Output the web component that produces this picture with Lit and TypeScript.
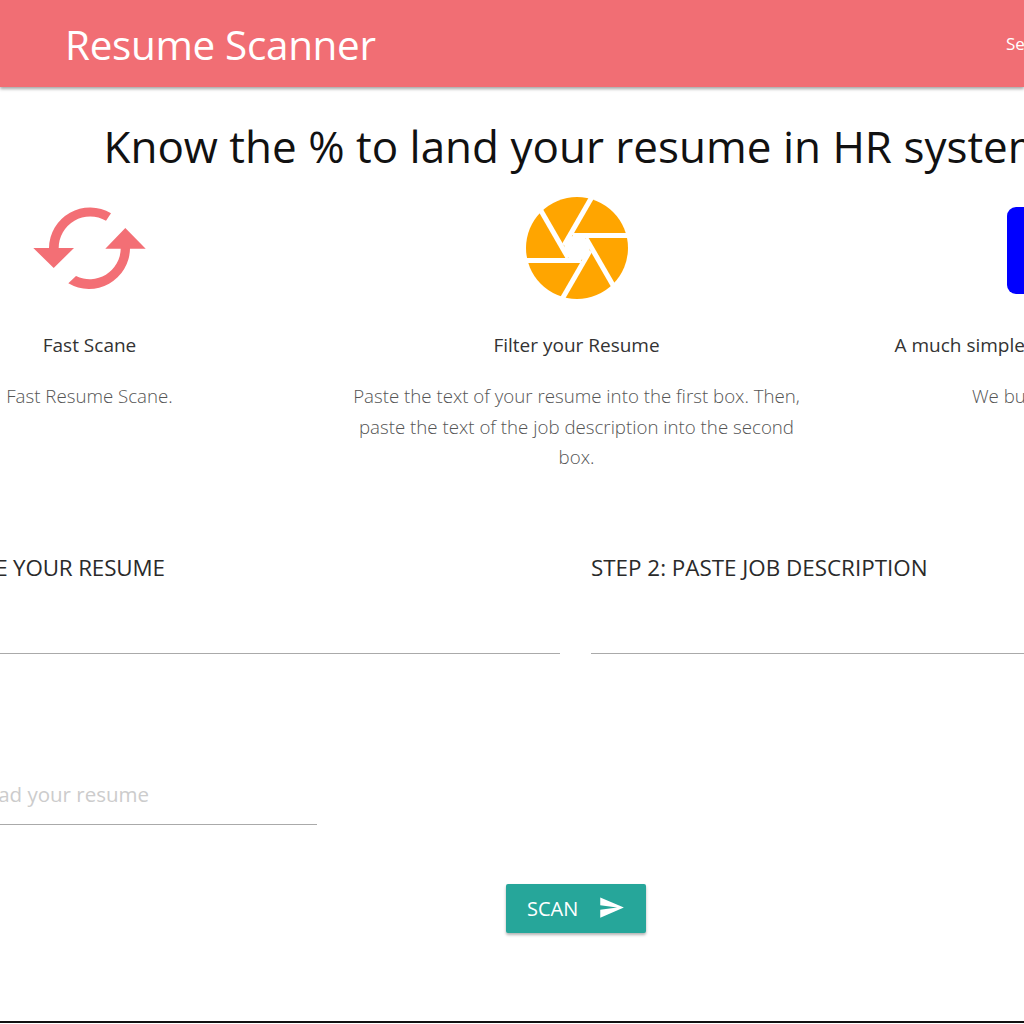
import { css, html, LitElement, svg } from "lit";
import { customElement } from "lit/decorators.js";

const features = [
	{ title: "Fast Scane", text: "Fast Resume Scane.", icon: "refresh" },
	{
		title: "Filter your Resume",
		text: "Paste the text of your resume into the first box. Then, paste the text of the job description into the second box.",
		icon: "shutter",
	},
	{
		title: "A much simpler way to check resumes",
		text: "We built this for hires.",
		icon: "block",
	},
];

const refreshIcon = html`<svg class="refresh" viewBox="33 206 114 84">
	<path fill="#f36f75" d="M33.3 248H49A41 41 0 0 1 111 213.3L106 220.7A31.5 31.5 0 0 0 58.7 248H74L53.7 268Z"/>
	<path fill="#f36f75" d="M125.3 228L145.7 248.7H130A41 41 0 0 1 68.3 283.3L76 276A31 31 0 0 0 120.7 248.7H105.3Z"/>
</svg>`;

const shutterIcon = html`<svg class="shutter" viewBox="-52 -52 104 104">
	<circle r="51" fill="#ffa500"/>
	<polygon fill="#fff" points="0,-14.6 12.6,-7.3 12.6,7.3 0,14.6 -12.6,7.3 -12.6,-7.3"/>
	${[0, 60, 120, 180, 240, 300].map(
		(deg) => svg`<line x1="-4" y1="-12.6" x2="60" y2="-12.6" stroke="#fff" stroke-width="5" transform="rotate(${deg})"/>`,
	)}
</svg>`;

@customElement("app-root")
export class AppRoot extends LitElement {
	static styles = css`
    :host {
      display: block;
      width: 1024px;
      height: 1024px;
      overflow: hidden;
      position: relative;
      background: #fff;
      color: #111;
      font-family: "Open Sans", "Noto Sans", sans-serif;
    }
    header {
      height: 87px;
      background: #f16e74;
      box-shadow: 0 2px 3px rgba(0,0,0,0.35);
      display: flex;
      align-items: center;
      color: #fff;
      padding-left: 65px;
      position: relative;
    }
    .brand {
      font-size: 40.4px;
      letter-spacing: -0.3px;
      width: 941px;
      flex: none;
      padding-top: 2px;
    }
    .nav {
      font-size: 17px;
      white-space: nowrap;
    }
    .page {
      width: 1460px;
      margin-left: -154px;
    }
    h1 {
      margin: 0;
      padding-top: 30px;
      height: 59px;
      line-height: 59px;
      font-size: 44px;
      font-weight: 400;
      text-align: center;
      white-space: nowrap;
      color: #111;
    }
    .features {
      display: grid;
      grid-template-columns: repeat(3, 487px);
      margin-top: 21px;
      height: 356px;
    }
    .feature {
      display: flex;
      flex-direction: column;
      align-items: center;
      text-align: center;
    }
    .icon {
      height: 102px;
      display: flex;
      align-items: center;
      justify-content: center;
    }
    .refresh { width: 114px; height: 84px; }
    .shutter { width: 104px; height: 104px; }
    .block {
      width: 114px;
      height: 87px;
      margin-top: 5px;
      border-radius: 9px;
      background: #0000ff;
    }
    h3 {
      margin: 33px 0 0;
      line-height: 26px;
      font-size: 19px;
      font-weight: 400;
      color: #333;
    }
    .feature p {
      margin: 23px 0 0;
      width: 452px;
      font-size: 18.7px;
      font-weight: 300;
      line-height: 30.5px;
      color: #555;
    }
    .steps {
      display: grid;
      grid-template-columns: 696px 696px;
      gap: 31px;
      padding-left: 18px;
    }
    .steps label {
      display: block;
      font-size: 22.4px;
      line-height: 30px;
      color: #2a2a2a;
      white-space: nowrap;
    }
    .steps label.tight {
      letter-spacing: -0.16px;
    }
    .rule {
      height: 1px;
      background: #aaa;
      margin-top: 70px;
    }
    .upload {
      margin: 112px 0 0 18px;
      width: 453px;
      height: 59px;
      border-bottom: 1px solid #aaa;
      box-sizing: border-box;
      text-align: right;
      padding-right: 168px;
      font-size: 20.5px;
      line-height: 57px;
      color: #ccc;
      white-space: nowrap;
    }
    .actions {
      display: flex;
      justify-content: center;
      margin-top: 59px;
    }
    button {
      width: 140px;
      height: 49px;
      padding: 0 0 0 21px;
      border: 0;
      border-radius: 2px;
      background: #26a69a;
      color: #fff;
      font: inherit;
      font-size: 20px;
      display: flex;
      align-items: center;
      gap: 20px;
      box-shadow: 0 2px 3px rgba(0,0,0,0.3);
    }
    button svg { width: 27px; height: 27px; fill: #fff; margin-top: -2px; }
    footer {
      height: 2px;
      background: #111;
      margin-top: 88px;
    }
  `;

	private renderIcon(icon: string) {
		if (icon === "refresh") return refreshIcon;
		if (icon === "shutter") return shutterIcon;
		return html`<div class="block"></div>`;
	}

	render() {
		return html`
      <header>
        <div class="brand">Resume Scanner</div>
        <div class="nav">Services</div>
      </header>
      <div class="page">
        <h1>Know the % to land your resume in HR system</h1>
        <section class="features">
          ${features.map(
						(f) => html`
              <div class="feature">
                <div class="icon">${this.renderIcon(f.icon)}</div>
                <h3>${f.title}</h3>
                <p>${f.text}</p>
              </div>
            `,
					)}
        </section>
        <section class="steps">
          <div>
            <label class="tight">STEP 1: PASTE YOUR RESUME</label>
            <div class="rule"></div>
          </div>
          <div>
            <label>STEP 2: PASTE JOB DESCRIPTION</label>
            <div class="rule"></div>
          </div>
        </section>
        <div class="upload">Upload your resume</div>
        <div class="actions">
          <button>
            SCAN
            <svg viewBox="0 0 24 24"><path d="M2.01 21L23 12 2.01 3 2 10l15 2-15 2z"/></svg>
          </button>
        </div>
        <footer></footer>
      </div>
    `;
	}
}
